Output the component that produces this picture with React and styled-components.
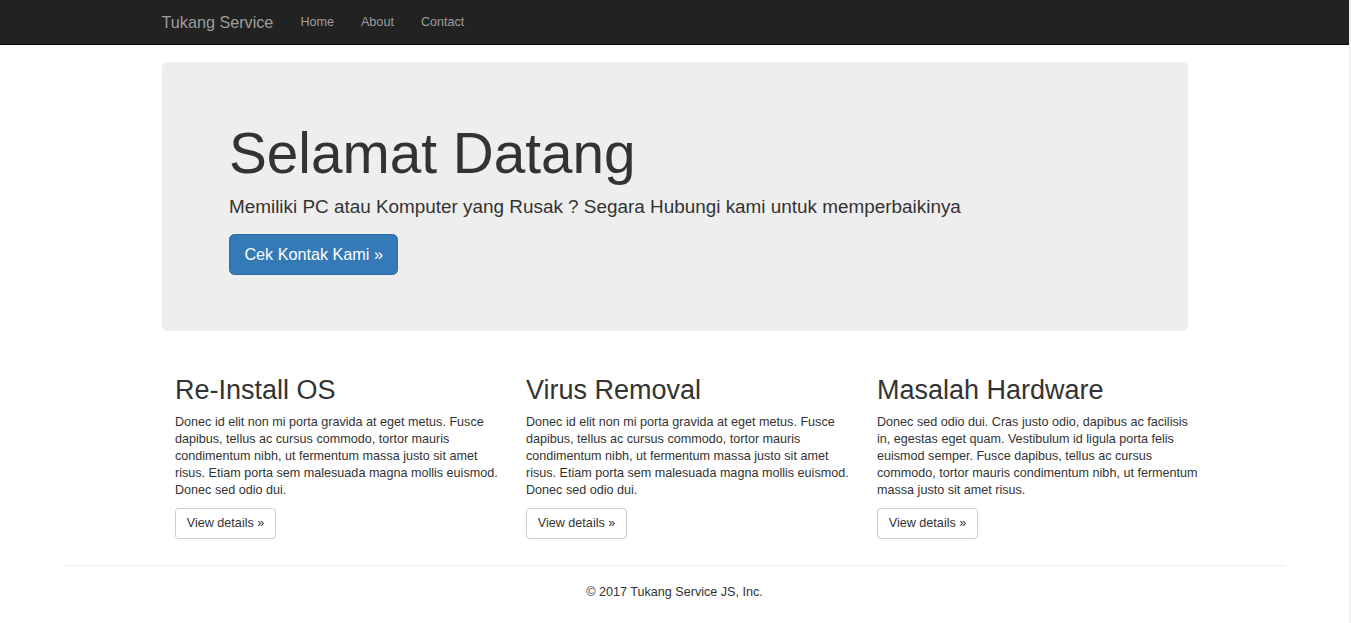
import React from "react";
import styled, { createGlobalStyle } from "styled-components";

const features = [
  {
    title: "Re-Install OS",
    text: "Donec id elit non mi porta gravida at eget metus. Fusce dapibus, tellus ac cursus commodo, tortor mauris condimentum nibh, ut fermentum massa justo sit amet risus. Etiam porta sem malesuada magna mollis euismod. Donec sed odio dui.",
  },
  {
    title: "Virus Removal",
    text: "Donec id elit non mi porta gravida at eget metus. Fusce dapibus, tellus ac cursus commodo, tortor mauris condimentum nibh, ut fermentum massa justo sit amet risus. Etiam porta sem malesuada magna mollis euismod. Donec sed odio dui.",
  },
  {
    title: "Masalah Hardware",
    text: "Donec sed odio dui. Cras justo odio, dapibus ac facilisis in, egestas eget quam. Vestibulum id ligula porta felis euismod semper. Fusce dapibus, tellus ac cursus commodo, tortor mauris condimentum nibh, ut fermentum massa justo sit amet risus.",
  },
];

export default function App() {
  return (
    <>
      <GlobalStyle />
      <Navbar>
        <NavContainer>
          <Brand href="#">Tukang Service</Brand>
          <NavLinks>
            <NavLink href="#">Home</NavLink>
            <NavLink href="#">About</NavLink>
            <NavLink href="#">Contact</NavLink>
          </NavLinks>
        </NavContainer>
      </Navbar>

      <Container>
        <Jumbotron>
          <JumboInner>
            <h1>Selamat Datang</h1>
            <p>
              Memiliki PC atau Komputer yang Rusak ? Segara Hubungi kami untuk
              memperbaikinya
            </p>
            <p>
              <PrimaryButton href="#">Cek Kontak Kami &raquo;</PrimaryButton>
            </p>
          </JumboInner>
        </Jumbotron>

        <Row>
          {features.map(({ title, text }, index) => (
            <Column key={index}>
              <h2>{title}</h2>
              <p>{text}</p>
              <p>
                <DefaultButton href="#">View details &raquo;</DefaultButton>
              </p>
            </Column>
          ))}
        </Row>
      </Container>

      <Footer>
        <p>&copy; 2017 Tukang Service JS, Inc.</p>
      </Footer>
    </>
  );
}

const GlobalStyle = createGlobalStyle`
  html {
    background: #f1f1f1;
  }
  body {
    margin: 0;
    margin-right: 2px;
    background: #ffffff;
    min-height: 623px;
    font-family: "Liberation Sans", Arial, sans-serif;
    font-size: 12.6px;
    line-height: 17px;
    color: #333333;
    overflow: hidden;
  }
  * {
    box-sizing: border-box;
  }
  a {
    text-decoration: none;
  }
`;

const Navbar = styled.nav`
  height: 45px;
  background-color: #222222;
  border-bottom: 1px solid #080808;
`;

const NavContainer = styled.div`
  width: 1053px;
  margin: 0 auto;
  padding: 0 13.5px;
  display: flex;
  align-items: stretch;
  height: 44px;
`;

const Brand = styled.a`
  margin-left: -13.5px;
  padding: 12.5px 13.5px;
  font-size: 16.2px;
  line-height: 18px;
  color: #9d9d9d;
`;

const NavLinks = styled.div`
  display: flex;
`;

const NavLink = styled.a`
  padding: 12.5px 13.5px;
  font-size: 12.6px;
  line-height: 18px;
  color: #9d9d9d;
`;

const Container = styled.div`
  width: 1053px;
  margin: 0 auto;
  padding: 17px 13.5px 0;
`;

const Jumbotron = styled.div`
  background-color: #eeeeee;
  border-radius: 5.4px;
  padding: 43.2px 54px;
  margin-bottom: 27px;
`;

const JumboInner = styled.div`
  padding: 0 13.5px;

  h1 {
    margin: 18px 0 7px;
    font-size: 56.7px;
    line-height: 62.4px;
    font-weight: 500;
    color: #333333;
  }
  p {
    margin: 0 0 14px;
    font-size: 18.9px;
    line-height: 27px;
    font-weight: 200;
  }
  p:last-child {
    margin-bottom: 13px;
    line-height: 0;
  }
`;

const PrimaryButton = styled.a`
  display: inline-block;
  padding: 9px 14.4px;
  font-size: 16.2px;
  line-height: 21.6px;
  color: #ffffff;
  background-color: #337ab7;
  border: 1px solid #2e6da4;
  border-radius: 5.4px;
`;

const Row = styled.div`
  display: grid;
  grid-template-columns: repeat(3, 351px);
  width: 1053px;
`;

const Column = styled.div`
  padding: 0 13.5px;

  h2 {
    margin: 18px 0 8px;
    font-size: 27px;
    line-height: 29.7px;
    font-weight: 500;
    color: #333333;
  }
  p {
    margin: 0 0 9px;
  }
`;

const DefaultButton = styled.a`
  display: inline-block;
  padding: 5.4px 10.8px;
  font-size: 12.6px;
  line-height: 18px;
  color: #333333;
  background-color: #ffffff;
  border: 1px solid #cccccc;
  border-radius: 3.6px;
`;

const Footer = styled.footer`
  width: 1221px;
  margin: 17px auto 0;
  border-top: 1px solid #eeeeee;
  padding-top: 18px;
  text-align: center;

  p {
    margin: 0;
  }
`;
